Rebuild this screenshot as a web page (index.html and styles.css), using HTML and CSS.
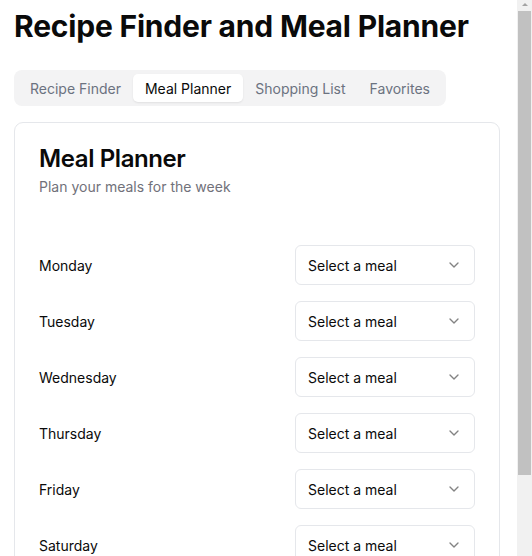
FILE: index.html
```html
<!DOCTYPE html>
<html>
<head>
	<title>Recipe Finder and Meal Planner</title>
	<link rel="stylesheet" href="styles.css">
</head>
<body>
	<div class="page">
		<h1>Recipe Finder and Meal Planner</h1>

		<div class="tabs">
			<button class="tab">Recipe Finder</button>
			<button class="tab active">Meal Planner</button>
			<button class="tab">Shopping List</button>
			<button class="tab">Favorites</button>
		</div>

		<div class="card">
			<div class="card-header">
				<h2>Meal Planner</h2>
				<p>Plan your meals for the week</p>
			</div>
			<div class="card-content">
				<div class="day-row">
					<label>Monday</label>
					<button class="select"><span>Select a meal</span><svg width="16" height="16" viewBox="0 0 24 24" fill="none" stroke="currentColor" stroke-width="2" stroke-linecap="round" stroke-linejoin="round"><path d="m6 9 6 6 6-6"/></svg></button>
				</div>
				<div class="day-row">
					<label>Tuesday</label>
					<button class="select"><span>Select a meal</span><svg width="16" height="16" viewBox="0 0 24 24" fill="none" stroke="currentColor" stroke-width="2" stroke-linecap="round" stroke-linejoin="round"><path d="m6 9 6 6 6-6"/></svg></button>
				</div>
				<div class="day-row">
					<label>Wednesday</label>
					<button class="select"><span>Select a meal</span><svg width="16" height="16" viewBox="0 0 24 24" fill="none" stroke="currentColor" stroke-width="2" stroke-linecap="round" stroke-linejoin="round"><path d="m6 9 6 6 6-6"/></svg></button>
				</div>
				<div class="day-row">
					<label>Thursday</label>
					<button class="select"><span>Select a meal</span><svg width="16" height="16" viewBox="0 0 24 24" fill="none" stroke="currentColor" stroke-width="2" stroke-linecap="round" stroke-linejoin="round"><path d="m6 9 6 6 6-6"/></svg></button>
				</div>
				<div class="day-row">
					<label>Friday</label>
					<button class="select"><span>Select a meal</span><svg width="16" height="16" viewBox="0 0 24 24" fill="none" stroke="currentColor" stroke-width="2" stroke-linecap="round" stroke-linejoin="round"><path d="m6 9 6 6 6-6"/></svg></button>
				</div>
				<div class="day-row">
					<label>Saturday</label>
					<button class="select"><span>Select a meal</span><svg width="16" height="16" viewBox="0 0 24 24" fill="none" stroke="currentColor" stroke-width="2" stroke-linecap="round" stroke-linejoin="round"><path d="m6 9 6 6 6-6"/></svg></button>
				</div>
				<div class="day-row">
					<label>Sunday</label>
					<button class="select"><span>Select a meal</span><svg width="16" height="16" viewBox="0 0 24 24" fill="none" stroke="currentColor" stroke-width="2" stroke-linecap="round" stroke-linejoin="round"><path d="m6 9 6 6 6-6"/></svg></button>
				</div>
			</div>
		</div>
	</div>

	<!-- window scrollbar, as the browser showed it -->
	<div class="scrollbar">
		<div class="scroll-arrow"></div>
		<div class="scroll-thumb"></div>
	</div>
</body>
</html>
```

FILE: styles.css
```css
/* Page layout */
body {
	display: flex;
	height: 100vh;
	margin: 0;
	overflow: hidden;
	font-family: Inter, "Noto Sans", sans-serif;
	color: #0a0a0a;
	background: #fff;
}

.page {
	flex: 1;
	min-width: 0;
	padding: 8px 17px 16px 14px;
}

/* Scrollbar */
.scrollbar {
	display: flex;
	flex-direction: column;
	align-items: center;
	width: 15px;
	flex-shrink: 0;
	background-color: #f1f1f1;
}

.scroll-arrow {
	margin-top: 3px;
	border-left: 3px solid transparent;
	border-right: 3px solid transparent;
	border-bottom: 3px solid #a3a3a3;
}

.scroll-thumb {
	width: 13px;
	height: 464px;
	margin-top: 5px;
	background-color: #c1c1c1;
}

h1 {
	margin: 0;
	font-size: 30px;
	line-height: 36px;
	font-weight: 700;
	letter-spacing: -0.2px;
}

/* Tabs */
.tabs {
	display: inline-flex;
	margin-top: 26px;
	padding: 4px;
	background-color: #f3f3f4;
	border-radius: 8px;
}

.tab {
	height: 28px;
	padding: 0 12px;
	border: none;
	border-radius: 5px;
	background: none;
	font-family: inherit;
	font-size: 14px;
	font-weight: 400;
	color: #6b7280;
	cursor: pointer;
}

.tab.active {
	background-color: #fff;
	color: #0a0a0a;
	box-shadow: 0 1px 2px rgba(0, 0, 0, 0.08);
}

/* Card */
.card {
	margin-top: 16px;
	border: 1px solid #e5e7eb;
	border-radius: 9px;
	background: #fff;
}

.card-header {
	padding: 24px 24px 0;
}

.card-header h2 {
	margin: 0;
	font-size: 24px;
	line-height: 24px;
	font-weight: 600;
	letter-spacing: -0.4px;
}

.card-header p {
	margin: 6px 0 0;
	font-size: 14px;
	line-height: 20px;
	color: #71717a;
}

.card-content {
	display: flex;
	flex-direction: column;
	gap: 16px;
	padding: 48px 24px 24px;
}

.day-row {
	display: flex;
	align-items: center;
	justify-content: space-between;
}

.day-row label {
	font-size: 14px;
	font-weight: 400;
}

.select {
	display: flex;
	align-items: center;
	justify-content: space-between;
	width: 180px;
	height: 40px;
	padding: 0 12px;
	border: 1px solid #e5e7eb;
	border-radius: 6px;
	background: #fff;
	font-family: inherit;
	font-size: 14px;
	color: #0a0a0a;
	cursor: pointer;
}

.select svg {
	opacity: 0.5;
}
```
